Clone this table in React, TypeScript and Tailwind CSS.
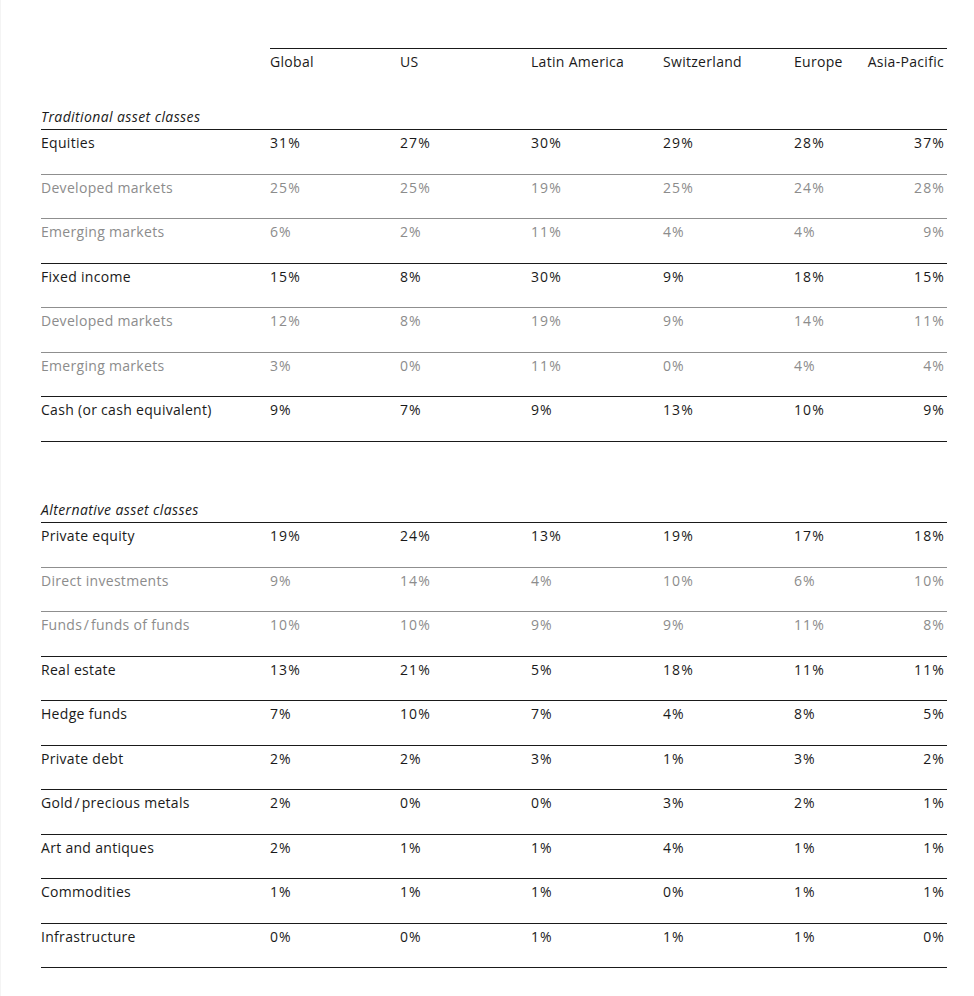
import React from "react";

type Row = { label: string; values: number[]; sub?: boolean };

const traditional: Row[] = [
  { label: "Equities", values: [31, 27, 30, 29, 28, 37] },
  { label: "Developed markets", values: [25, 25, 19, 25, 24, 28], sub: true },
  { label: "Emerging markets", values: [6, 2, 11, 4, 4, 9], sub: true },
  { label: "Fixed income", values: [15, 8, 30, 9, 18, 15] },
  { label: "Developed markets", values: [12, 8, 19, 9, 14, 11], sub: true },
  { label: "Emerging markets", values: [3, 0, 11, 0, 4, 4], sub: true },
  { label: "Cash (or cash equivalent)", values: [9, 7, 9, 13, 10, 9] },
];

const alternative: Row[] = [
  { label: "Private equity", values: [19, 24, 13, 19, 17, 18] },
  { label: "Direct investments", values: [9, 14, 4, 10, 6, 10], sub: true },
  { label: "Funds\u200A/\u200Afunds of funds", values: [10, 10, 9, 9, 11, 8], sub: true },
  { label: "Real estate", values: [13, 21, 5, 18, 11, 11] },
  { label: "Hedge funds", values: [7, 10, 7, 4, 8, 5] },
  { label: "Private debt", values: [2, 2, 3, 1, 3, 2] },
  { label: "Gold\u200A/\u200Aprecious metals", values: [2, 0, 0, 3, 2, 1] },
  { label: "Art and antiques", values: [2, 1, 1, 4, 1, 1] },
  { label: "Commodities", values: [1, 1, 1, 0, 1, 1] },
  { label: "Infrastructure", values: [0, 0, 1, 1, 1, 0] },
];

const headers = ["Global", "US", "Latin America", "Switzerland", "Europe", "Asia-Pacific"];

const grid = "grid grid-cols-[229px_130px_131px_132px_131px_70px_82px]";
const headGrid = "grid grid-cols-[130px_131px_132px_131px_70px_82px]";

function DataRow({ row }: { row: Row }) {
  const color = row.sub ? "text-[#8c8c8c]" : "text-[#1a1a1a]";
  const border = row.sub ? "border-[#8f8f8f]" : "border-[#1a1a1a]";
  return (
    <div className={`${grid} h-[44.5px] border-t ${border} ${color} pt-[3px] leading-5`}>
      <div>{row.label}</div>
      {row.values.map((v, i) => (
        <div
          key={i}
          className={
            i === 5
              ? "text-right pr-[1px] whitespace-nowrap tracking-[1.1px]"
              : "whitespace-nowrap tracking-[1.1px]"
          }
        >
          {v}%
        </div>
      ))}
    </div>
  );
}

function Section({ title, rows }: { title: string; rows: Row[] }) {
  return (
    <div>
      <div className="h-[22px] leading-5 italic tracking-[0.4px] text-[#1a1a1a]">{title}</div>
      <div className="border-b border-[#1a1a1a]">
        {rows.map((r, i) => (
          <DataRow key={i} row={r} />
        ))}
      </div>
    </div>
  );
}

export default function App() {
  return (
    <div
      className="min-h-[996px] w-[974px] bg-white border-l border-[#f4f4f4] text-[14px] tracking-[0.3px]"
      style={{ fontFamily: '"Open Sans", "Noto Sans", sans-serif' }}
    >
      <div className="pl-[40px] pt-[48px] w-[946px]">
        <div className="flex h-[59px]">
          <div className="w-[229px] shrink-0" />
          <div className="flex-1 border-t border-[#1a1a1a]">
            <div className={`${headGrid} pt-[3px] leading-5 text-[#1a1a1a]`}>
              {headers.map((h, i) => (
                <div key={h} className={i === 5 ? "text-right pr-[2px] whitespace-nowrap" : "whitespace-nowrap"}>
                  {h}
                </div>
              ))}
            </div>
          </div>
        </div>
        <Section title="Traditional asset classes" rows={traditional} />
        <div className="h-[58.5px]" />
        <Section title="Alternative asset classes" rows={alternative} />
      </div>
    </div>
  );
}
